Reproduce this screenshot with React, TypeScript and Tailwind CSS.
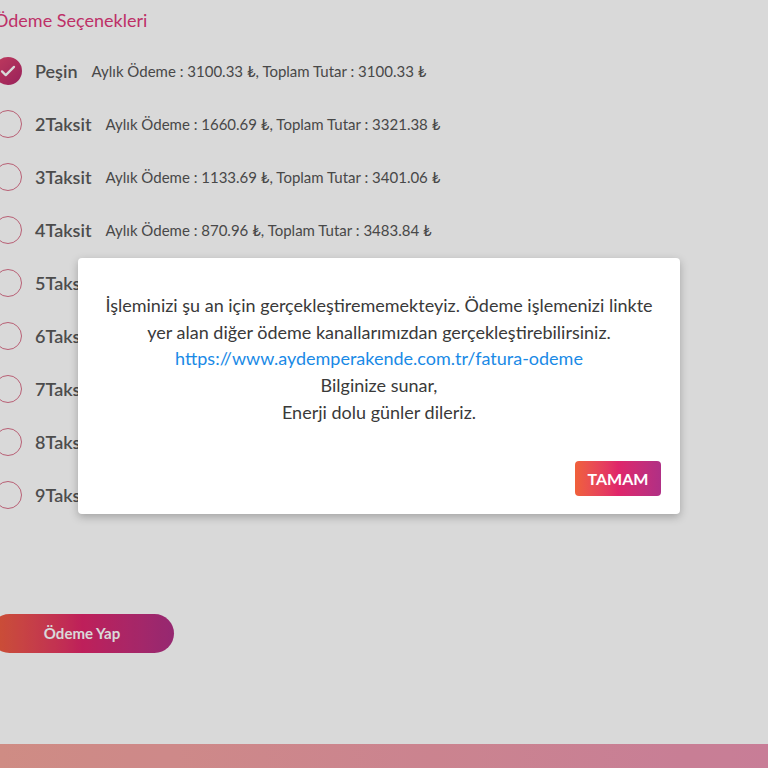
const options = [
  { label: "Peşin", monthly: "3100.33", total: "3100.33" },
  { label: "2Taksit", monthly: "1660.69", total: "3321.38" },
  { label: "3Taksit", monthly: "1133.69", total: "3401.06" },
  { label: "4Taksit", monthly: "870.96", total: "3483.84" },
  { label: "5Taksit", monthly: "703.40", total: "3517.00" },
  { label: "6Taksit", monthly: "591.72", total: "3550.32" },
  { label: "7Taksit", monthly: "512.05", total: "3584.35" },
  { label: "8Taksit", monthly: "452.39", total: "3619.12" },
  { label: "9Taksit", monthly: "406.06", total: "3654.54" },
];

function Radio({ checked }: { checked: boolean }) {
  if (checked) {
    return (
      <div className="w-[28px] h-[28px] rounded-full bg-gradient-to-br from-[#e2466e] to-[#b3266a] flex items-center justify-center shrink-0">
        <svg width="18" height="18" viewBox="0 0 24 24" fill="none" stroke="white" strokeWidth="3" strokeLinecap="round" strokeLinejoin="round">
          <path d="M4 12.5l5 5L20 6.5" />
        </svg>
      </div>
    );
  }
  return <div className="w-[28px] h-[28px] rounded-full border-[1.5px] border-[#d9718a] bg-white shrink-0" />;
}

export default function App() {
  return (
    <div className="relative w-[768px] h-[768px] overflow-hidden bg-white" style={{ fontFamily: "Lato, 'Open Sans', sans-serif" }}>
      <div className="-ml-[6px] pt-[8px]">
        {/* Title */}
        <h2 className="text-[18px] text-[#e0397a] leading-[24px]">Ödeme Seçenekleri</h2>

        {/* Options */}
        <div className="mt-[25px] flex flex-col gap-[25px]">
          {options.map((o, i) => (
            <div key={o.label} className="flex items-center h-[28px]">
              <Radio checked={i === 0} />
              <span className="ml-[13px] text-[18px] font-semibold text-[#5a5a5a]">{o.label}</span>
              <span className="ml-[14px] text-[15px] text-[#555]">
                Aylık Ödeme : {o.monthly} ₺, Toplam Tutar : {o.total} ₺
              </span>
            </div>
          ))}
        </div>

        {/* Submit */}
        <button className="mt-[105px] -ml-[4px] w-[184px] h-[39px] rounded-full bg-gradient-to-r from-[#f0603a] via-[#e0256a] to-[#b02f85] text-white font-bold text-[15px]">
          Ödeme Yap
        </button>
      </div>

      {/* Footer strip */}
      <div className="absolute left-0 right-0 bottom-0 h-[24px] bg-gradient-to-r from-[#f4a59c] to-[#eb93b2]" />

      {/* Overlay */}
      <div className="absolute inset-0 bg-black/15" />

      {/* Dialog */}
      <div className="absolute left-[78px] top-[258px] w-[602px] h-[256px] bg-white rounded-[4px] shadow-[0_3px_8px_rgba(0,0,0,0.25)] flex flex-col">
        <div className="pt-[34px] px-[8px] text-center text-[18px] leading-[26.7px] text-[#3a3a3a] whitespace-nowrap">
          <p>
            İşleminizi şu an için gerçekleştirememekteyiz. Ödeme işlemenizi linkte
            <br />
            yer alan diğer ödeme kanallarımızdan gerçekleştirebilirsiniz.
          </p>
          <p className="text-[#1a8ae6]">https://www.aydemperakende.com.tr/fatura-odeme</p>
          <p>Bilginize sunar,</p>
          <p>Enerji dolu günler dileriz.</p>
        </div>
        <div className="mt-auto mb-[18px] mr-[19px] flex justify-end">
          <button className="w-[86px] h-[35px] rounded-[4px] bg-gradient-to-r from-[#f0603a] via-[#e0256a] to-[#b02f85] text-white font-bold text-[16px]">
            TAMAM
          </button>
        </div>
      </div>
    </div>
  );
}
